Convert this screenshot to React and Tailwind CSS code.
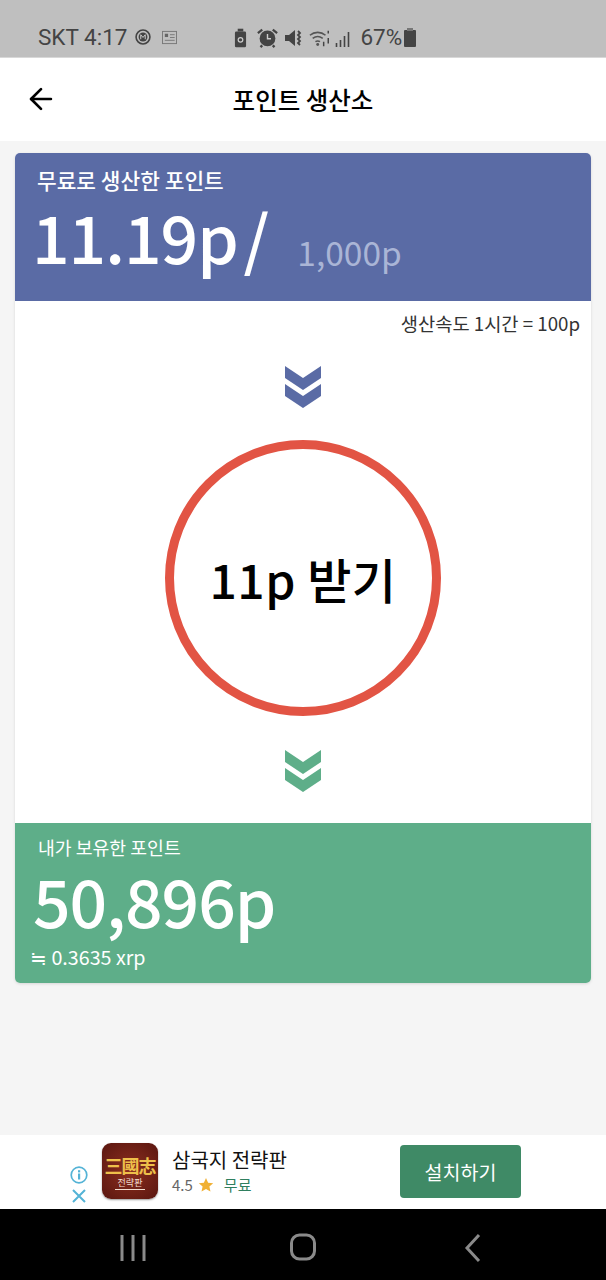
import { ArrowLeft } from 'lucide-react'

const KR = { fontFamily: '"Noto Sans CJK KR", "Noto Sans", sans-serif' }

function Chevrons({ color }) {
  return (
    <svg width="36" height="42" viewBox="0 0 36 42" className="block">
      <path d="M0 0 L18 12 L36 0 V12 L18 24 L0 12 Z" fill={color} />
      <path d="M0 18 L18 30 L36 18 V30 L18 42 L0 30 Z" fill={color} />
    </svg>
  )
}

function StatusBar() {
  return (
    <div className="h-[58px] bg-[#bfbfbf] border-b border-[#d8d8d8] flex items-end pb-[5px] pl-[38px] text-[#444] text-[22.5px] leading-[30px] shrink-0" style={{ fontFamily: 'Roboto, sans-serif' }}>
      <span>SKT 4:17</span>
      <svg width="16" height="16" viewBox="0 0 18 18" className="ml-[8px] mb-[7px]">
        <circle cx="9" cy="9" r="7.8" fill="none" stroke="#444" strokeWidth="1.8" />
        <circle cx="9" cy="9" r="5" fill="#444" />
        <path d="M6.5 11.5v-5l2.5 3 2.5-3v5" stroke="#ccc" strokeWidth="1.1" fill="none" />
      </svg>
      <svg width="15" height="15" viewBox="0 0 16 16" className="ml-[11px] mb-[7px]">
        <rect x="0.5" y="1.5" width="15" height="13" fill="none" stroke="#777" />
        <rect x="3" y="4" width="3.5" height="3.5" fill="#666" />
        <path d="M8.5 5h5M8.5 8h5M3 11h10.5" stroke="#777" />
      </svg>
      <svg width="13" height="20" viewBox="0 0 14 20" className="ml-[57px] mb-[4px]">
        <rect x="1" y="3" width="12" height="17" rx="1.5" fill="#444" />
        <rect x="4" y="0" width="6" height="3" fill="#444" />
        <circle cx="7" cy="12" r="2.5" fill="none" stroke="#ccc" strokeWidth="1.3" />
      </svg>
      <svg width="21" height="21" viewBox="0 0 24 22" className="ml-[10px] mb-[4px]">
        <circle cx="12" cy="12" r="9" fill="#444" />
        <path d="M12 7v5.5h4" stroke="#ccc" strokeWidth="1.6" fill="none" />
        <path d="M1 6l5-4M23 6l-5-4M6 20l-2 2M18 20l2 2" stroke="#444" strokeWidth="2.6" />
      </svg>
      <svg width="18" height="20" viewBox="0 0 18 20" className="ml-[7px] mb-[4px]">
        <path d="M0 7h4l6-5v16l-6-5H0Z" fill="#444" />
        <path d="M13 3l2 2-2 2 2 2-2 2 2 2-2 2 2 2" stroke="#444" strokeWidth="1.8" fill="none" />
      </svg>
      <svg width="22" height="20" viewBox="0 0 24 20" className="ml-[6px] mb-[4px]">
        <path d="M1 7a13 13 0 0 1 17 0M4 10.5a9 9 0 0 1 11 0M7 14a5 5 0 0 1 5 0" stroke="#555" strokeWidth="1.7" fill="none" />
        <circle cx="9.5" cy="17" r="1.6" fill="#555" />
        <path d="M16 14v5M21 2v3M21 10v6" stroke="#444" strokeWidth="1.6" />
      </svg>
      <svg width="17" height="16" viewBox="0 0 16 16" className="ml-[4px] mb-[5px]">
        <path d="M1 12v4M5 9v7M9 5v11M13 1v15" stroke="#444" strokeWidth="1.6" />
      </svg>
      <span className="ml-[8px]">67%</span>
      <svg width="12" height="19" viewBox="0 0 12 19" className="ml-[2px] mb-[5px]">
        <rect x="0" y="2" width="12" height="17" rx="1" fill="#444" />
        <rect x="3" y="0" width="6" height="3" fill="#777" />
      </svg>
    </div>
  )
}

function AdBanner() {
  return (
    <div className="h-[74px] bg-white flex shrink-0 relative" style={KR}>
      <div className="w-[102px] flex flex-col items-end pr-[14px] pt-[31px] gap-[4px]">
        <svg width="18" height="18" viewBox="0 0 18 18">
          <circle cx="9" cy="9" r="7.8" fill="none" stroke="#54b3d6" strokeWidth="1.7" />
          <rect x="8" y="7.5" width="2.2" height="6" fill="#54b3d6" />
          <rect x="8" y="4.2" width="2.2" height="2.2" fill="#54b3d6" />
        </svg>
        <svg width="16" height="16" viewBox="0 0 16 16" className="mr-[1px]">
          <path d="M2 2l12 12M14 2L2 14" stroke="#54b3d6" strokeWidth="2" />
        </svg>
      </div>
      <div className="w-[56px] h-[56px] mt-[8px] rounded-[9px] bg-[radial-gradient(circle,#8c2f1f_0%,#5a1610_100%)] shadow-[0_1px_2px_rgba(0,0,0,0.4)] flex flex-col items-center justify-center shrink-0">
        <span className="text-[#eec04a] text-[18px] leading-[24px] font-bold tracking-[-1px] whitespace-nowrap">三國志</span>
        <span className="text-[#f3ddd0] text-[9px] leading-[12px] border-b border-[#f3ddd0] whitespace-nowrap px-[3px]">전략판</span>
      </div>
      <div className="ml-[14px] pt-[11px] w-[228px]">
        <div className="text-[20px] leading-[28px] text-[#111]">삼국지 전략판</div>
        <div className="flex items-center text-[15px] leading-[20px] mt-[1px]">
          <span className="text-[#666]">4.5</span>
          <svg width="16" height="16" viewBox="0 0 24 24" className="ml-[5px]">
            <path d="M12 1.5l3.2 7 7.6.8-5.7 5.1 1.6 7.5L12 18.1l-6.7 3.8 1.6-7.5L1.2 9.3l7.6-.8Z" fill="#f0b033" />
          </svg>
          <span className="ml-[10px] text-[#2f7f5e]">무료</span>
        </div>
      </div>
      <div className="w-[121px] h-[53px] mt-[10px] rounded-[4px] bg-[#3f8a66] text-white text-[19.5px] flex items-center justify-center shrink-0">설치하기</div>
    </div>
  )
}

function NavBar() {
  return (
    <div className="h-[71px] bg-black flex items-center shrink-0 pb-[1px]">
      <svg width="606" height="71" viewBox="0 0 606 71">
        <path d="M122 26v26M133 26v26M144 26v26" stroke="#8a8a8a" strokeWidth="3" fill="none" />
        <rect x="291.5" y="26" width="23" height="24" rx="8" stroke="#8a8a8a" strokeWidth="3" fill="none" />
        <path d="M479 26l-12 13 12 13" stroke="#8a8a8a" strokeWidth="3" fill="none" />
      </svg>
    </div>
  )
}

export default function App() {
  return (
    <div className="w-[606px] h-[1280px] flex flex-col bg-[#f5f5f5] overflow-hidden" style={KR}>
      <StatusBar />

      {/* Header */}
      <div className="h-[83px] bg-white flex items-center relative shrink-0">
        <ArrowLeft className="absolute left-[24px] top-[24px]" size={34} color="#000" strokeWidth={1.9} />
        <div className="w-full text-center text-[24.5px] font-medium text-black pt-[1px]">포인트 생산소</div>
      </div>

      <div className="flex-1 px-[15px] pt-[12px]">
        <div className="rounded-[5px] overflow-hidden bg-white shadow-[0_1px_3px_rgba(0,0,0,0.12)]">
          {/* Free points */}
          <div className="h-[148px] bg-[#5a6ba5] text-white pl-[17px] flex flex-col">
            <div className="text-[21.4px] leading-[30px] mt-[12px] pl-[5px] font-medium">무료로 생산한 포인트</div>
            <div className="flex items-baseline mt-[10px] whitespace-nowrap">
              <span className="text-[66px] leading-[60px] font-medium tracking-[-1px] [word-spacing:-8px]">11.19p /</span>
              <span className="text-[33.5px] leading-[40px] text-[#aab5d6] ml-[29px] translate-y-[2px]">1,000p</span>
            </div>
          </div>

          {/* Claim area */}
          <div className="h-[522px] flex flex-col items-center relative">
            <div className="self-end pr-[11px] pt-[7px] text-[18.7px] leading-[30px] text-[#333]">생산속도 1시간 = 100p</div>
            <div className="mt-[28px]"><Chevrons color="#5a6ba5" /></div>
            <div className="w-[276px] h-[276px] mt-[32px] rounded-full border-[9px] border-[#e25444] flex items-center justify-center text-[48px] font-medium text-black tracking-[0.5px]">11p 받기</div>
            <div className="mt-[34px]"><Chevrons color="#5eae89" /></div>
          </div>

          {/* Owned points */}
          <div className="h-[160px] bg-[#5eae89] text-white flex flex-col">
            <div className="text-[18.3px] leading-[26px] mt-[11px] pl-[23px]">내가 보유한 포인트</div>
            <div className="text-[66px] leading-[60px] pl-[18px] mt-[9px] font-medium tracking-[-1px]">50,896p</div>
            <div className="text-[19.7px] leading-[26px] pl-[15px] mt-[15px]">≒ 0.3635 xrp</div>
          </div>
        </div>
      </div>

      <AdBanner />
      <NavBar />
    </div>
  )
}
